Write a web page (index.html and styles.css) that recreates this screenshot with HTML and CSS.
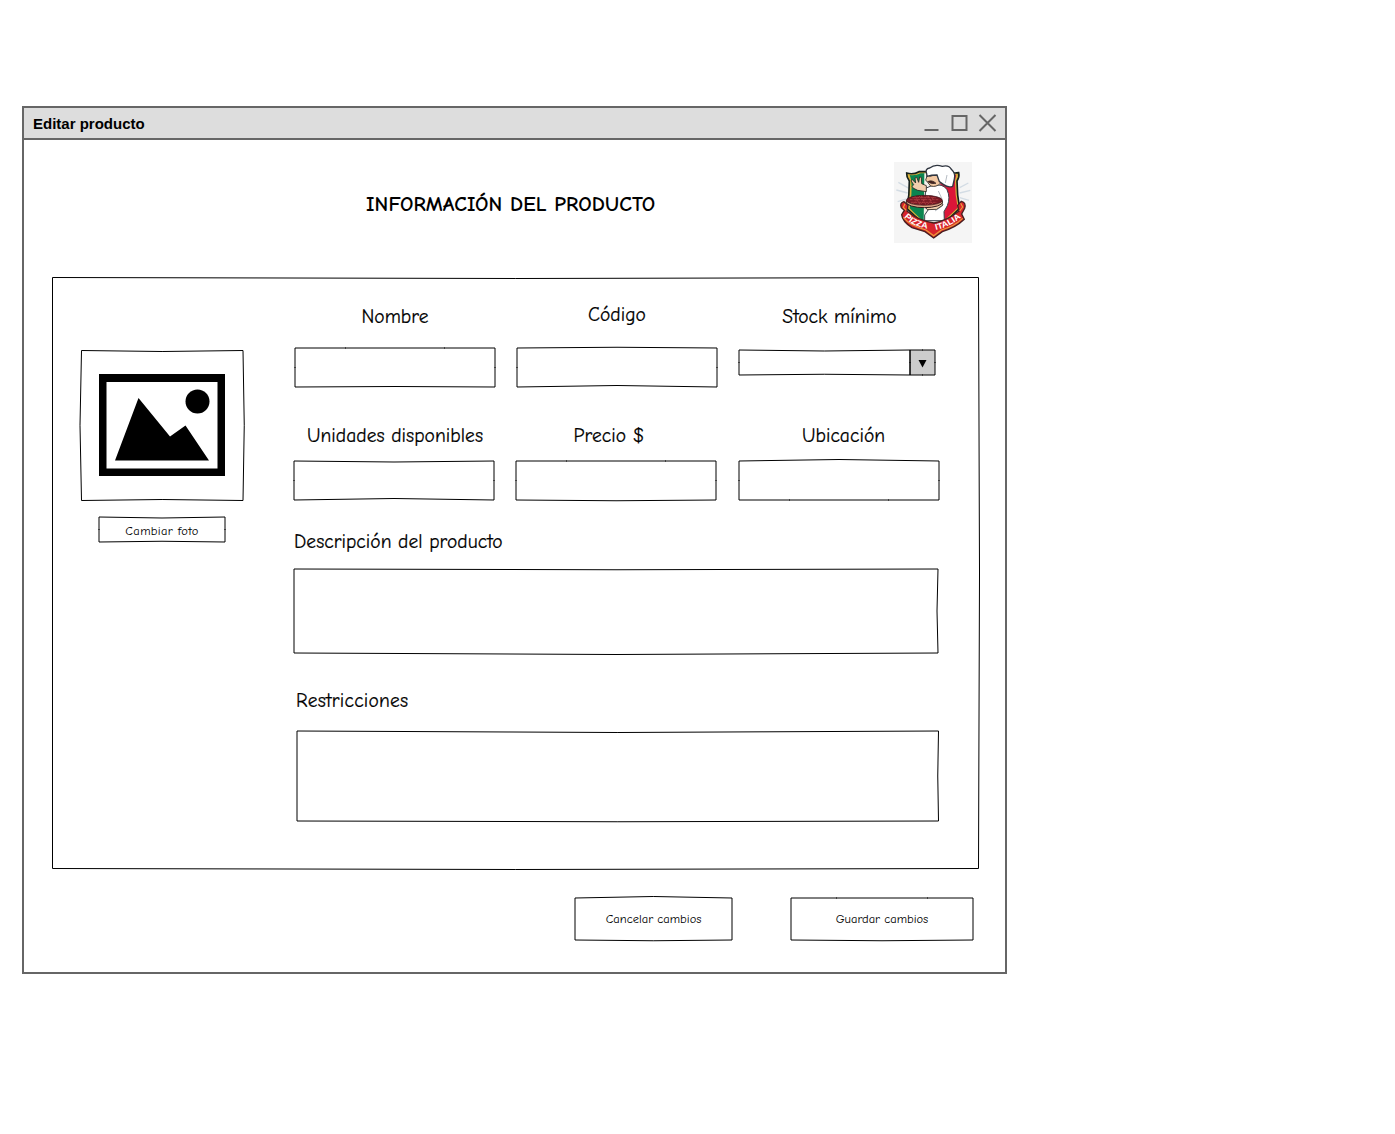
FILE: index.html
```html
<!DOCTYPE html>
<html lang="es">
<head>
<meta charset="utf-8">
<title>Editar producto</title>
<link rel="stylesheet" href="styles.css">
</head>
<body>
<main class="window">
  <header class="titlebar">
    <h1 class="titlebar-text">Editar producto</h1>
    <svg class="controls" width="74" height="20" viewBox="0 0 74 20">
      <path d="M1.500 17H15.500M29.500 3H43.500V17H29.500ZM56.500 2L72.500 18M72.500 2L56.500 18"/>
    </svg>
  </header>

  <section class="heading">
    <h2 class="title">INFORMACIÓN DEL PRODUCTO</h2>
    <svg class="logo" width="78" height="81" viewBox="27 21 234 243">
      <rect x="27" y="21" width="234" height="243" fill="#f5f5f5"/>
      <path d="M40 82L72 100M34 105L68 114M38 140L70 130M224 98L250 84M224 114L256 106M224 128L252 136" stroke="#d3dce4" stroke-width="4"/>
      <path d="M65 54Q84 60 102 50H192Q204 56 221 53Q224 66 216 78Q216 120 224 160L146 236L65 160Q74 120 73 78Q64 66 65 54Z" fill="#d9b23a" stroke="#16201c" stroke-width="5"/>
      <path d="M74 60Q91 63 107 55H126V210L74 160Q82 115 79 76Z" fill="#0b8550"/>
      <path d="M118 55H168V215L146 228L116 205Z" fill="#f4f1ea"/>
      <path d="M166 55H190Q201 61 214 59L210 77Q210 120 218 158L166 208Z" fill="#dc1638"/>
      <path d="M122 100L140 92Q174 84 186 104Q197 128 187 152L177 170L178 197H119V180L130 164L119 156Z" fill="#fff" stroke="#3a424c" stroke-width="3"/>
      <path d="M124 110L98 106L84 99Q78 94 86 89L78 77L82 74L92 84L90 69L95 67L101 82L104 66L109 67L110 86L124 92Z" fill="#f2cfae" stroke="#29251f" stroke-width="2.5"/>
      <path d="M127 61L158 56L167 84Q154 98 137 93L128 82L122 75Z" fill="#f2c8a2" stroke="#29251f" stroke-width="2.5"/>
      <path d="M128 80Q141 73 153 85Q140 89 128 80M133 65L143 62" fill="#4b2620" stroke="#2b211f" stroke-width="2"/>
      <path d="M126 64L125 56Q119 42 134 39Q150 26 172 34Q192 29 199 43Q213 56 208 72L203 94Q190 99 176 89L163 80L156 60Q139 60 126 64Z" fill="#fff" stroke="#303641" stroke-width="4"/>
      <path d="M186 60L181 84M145 138L168 150M150 168L172 153M160 108L172 134" stroke="#b6bcc3" stroke-width="3" fill="none"/>
      <path d="M121 157L153 150L169 140L174 150L155 163L127 164Z" fill="#f2cfae" stroke="#29251f" stroke-width="2.5"/>
      <ellipse cx="118" cy="141" rx="55" ry="17" fill="#e3a98a" stroke="#321c1c" stroke-width="3"/>
      <ellipse cx="118" cy="136" rx="54" ry="15" fill="#791924" stroke="#381719" stroke-width="2"/>
      <path d="M75 134H160M82 128H152M78 142H156M90 124L105 149M109 122L123 150M129 122L143 147M105 123L85 146M127 123L106 149M147 126L127 149" stroke="#c0484a" stroke-width="2" stroke-dasharray="8 3"/>
      <path d="M57 140Q43 144 49 158L58 166L50 179Q52 200 81 218L120 230L146 249L172 230Q212 218 238 193L230 177L239 160Q244 142 229 139L218 151L222 168Q190 195 147 204Q98 196 66 168L69 151Z" fill="#d8242c" stroke="#46201f" stroke-width="4"/>
      <path d="M60 146L55 157L64 166M227 145L233 156L224 168M55 187Q76 212 123 225L146 242L169 225Q208 214 233 190" fill="none" stroke="#eba13b" stroke-width="3.5"/>
      <path id="ribbon-left" d="M57 186Q84 216 134 222" fill="none"/>
      <path id="ribbon-right" d="M152 225Q200 214 232 183" fill="none"/>
      <text class="logo-text"><textPath href="#ribbon-left" textLength="80" lengthAdjust="spacingAndGlyphs">PIZZA</textPath></text>
      <text class="logo-text"><textPath href="#ribbon-right" textLength="86" lengthAdjust="spacingAndGlyphs">ITALIA</textPath></text>
    </svg>
  </section>

  <section class="panel sketch">
    <svg class="outline"><path d="M.5 .5Q463 2.5 926.5 .5Q928.5 296 926.5 591.5Q463 593.5 .5 591.5Z"/></svg>
    <div class="photo-column">
      <div class="photo sketch">
        <svg class="outline"><path d="M.5 .5Q81 2.5 162 .5Q164.5 75 162 150.5Q81 148.5 .5 150.5Q-2.5 75 .5 .5Z"/></svg>
        <svg class="picture" width="126" height="102" viewBox="0 0 126 102">
          <path fill-rule="evenodd" d="M0 0H126V102H0ZM7.5 8V94.5H118.5V8Z"/>
          <path d="M16 86.5L39.5 24L71 62.5L86.500 51.500L110 86.500Z"/>
          <circle cx="98.500" cy="27.500" r="12"/>
        </svg>
      </div>
      <button class="button change-photo sketch">
        <svg class="outline"><path d="M0 0Q63 2 126 0V25Q63 23.500 0 25Z"/><path class="tick" d="M-1 12.500h2M125 12.500h2"/></svg>
        <span>Cambiar foto</span>
      </button>
    </div>

    <form class="fields">
      <div class="row">
        <div class="field">
          <label class="label nombre">Nombre</label>
          <div class="input sketch"><svg class="outline"><path d="M0 0H200V39Q100 38 0 39Z"/><path class="tick" d="M-1 19.500h2M199 19.500h2M50.500 -1v2M149.500 -1v2"/></svg></div>
        </div>
        <div class="field">
          <label class="label codigo">Código</label>
          <div class="input sketch"><svg class="outline"><path d="M0 0Q100 -1.500 200 0V39Q100 36 0 39Z"/><path class="tick" d="M-1 19.500h2M199 19.500h2"/></svg></div>
        </div>
        <div class="field">
          <label class="label stock">Stock mínimo</label>
          <div class="select sketch">
            <svg class="outline"><path class="arrow-box" d="M171 0H196V25H171Z"/><path d="M0 0Q85 2 171 0V25Q85 23.500 0 25Z"/><path class="tick" d="M-1 12.500h2M170 12.500h2M195 12.500h2M183.500 -1v2M183.500 24v2"/><path class="arrow" d="M179.500 10H187.500L183.500 17.500Z"/></svg>
          </div>
        </div>
      </div>
      <div class="row second">
        <div class="field">
          <label class="label unidades">Unidades disponibles</label>
          <div class="input sketch"><svg class="outline"><path d="M0 0Q100 2 200 0V39Q100 36 0 39Z"/><path class="tick" d="M-1 19.500h2M199 19.500h2"/></svg></div>
        </div>
        <div class="field">
          <label class="label precio">Precio $</label>
          <div class="input sketch"><svg class="outline"><path d="M0 0H200V39Q100 40.500 0 39Z"/><path class="tick" d="M-1 19.500h2M199 19.500h2M50.500 -1v2M149.500 -1v2"/></svg></div>
        </div>
        <div class="field">
          <label class="label ubicacion">Ubicación</label>
          <div class="input sketch"><svg class="outline"><path d="M0 0Q100 -3 200 0V39H0Z"/><path class="tick" d="M-1 19.500h2M199 19.500h2M50.500 38v2M149.500 38v2"/></svg></div>
        </div>
      </div>
      <label class="label descripcion">Descripción del producto</label>
      <div class="area description-area sketch"><svg class="outline"><path d="M0 0Q322 1.500 644 0Q642 42 644 84Q322 87 0 84Z"/></svg></div>
      <label class="label restricciones">Restricciones</label>
      <div class="area restriction-area sketch"><svg class="outline"><path d="M0 0Q321 3 641.500 0Q640 45 641.500 90Q321 91.500 0 90Z"/></svg></div>
    </form>
  </section>

  <footer class="actions">
    <button class="button cancel sketch">
      <svg class="outline"><path d="M0 0Q78 -3 157 0V42Q78 43.500 0 42Z"/></svg>
      <span>Cancelar cambios</span>
    </button>
    <button class="button save sketch">
      <svg class="outline"><path d="M0 0H182V42Q91 43.500 0 42Z"/><path class="tick" d="M45.500 -1v2M136.500 -1v2"/></svg>
      <span>Guardar cambios</span>
    </button>
  </footer>
</main>
</body>
</html>
```
FILE: styles.css
```css
* { box-sizing: border-box; }

body {
  margin: 0;
  padding: 106px 0 0 22px;
  background: #fff;
  color: #000;
  font-family: "Comic Sans MS", "Comic Neue", Lato, sans-serif;
}

.window {
  width: 985px;
  height: 868px;
  border: 2px solid #666;
}

.titlebar {
  display: flex;
  align-items: center;
  justify-content: space-between;
  height: 32px;
  padding: 0 8px 0 9px;
  border-bottom: 2px solid #666;
  background: #ddd;
}

.titlebar-text {
  margin: 2px 0 0;
  font: bold 15px/20px "Liberation Sans", Arial, sans-serif;
}

.controls { fill: none; stroke: #666; stroke-width: 2; }

.heading {
  display: flex;
  justify-content: flex-end;
  align-items: flex-start;
  height: 137px;
  padding: 22px 33px 0 0;
}

.title {
  width: 290px;
  margin: 29px 238px 0 0;
  font-size: 21px;
  line-height: 26px;
  font-weight: bold;
  white-space: nowrap;
  letter-spacing: 0.12px;
}

.logo { display: block; flex: none; }
.logo-text { font: bold 25px "Liberation Sans", sans-serif; fill: #fff; }

.sketch { position: relative; }

.outline {
  position: absolute;
  top: 0;
  left: 0;
  width: 100%;
  height: 100%;
  overflow: visible;
  fill: none;
  stroke: #000;
  stroke-width: 1;
}

.tick { opacity: 0.5; }

.panel {
  display: flex;
  width: 927px;
  height: 592px;
  margin-left: 28px;
}

.photo-column { width: 242px; padding: 73px 0 0 29px; }

.photo {
  width: 163px;
  height: 151px;
  padding: 24px 0 0 18px;
}

.picture { display: block; }

.button {
  display: flex;
  align-items: center;
  justify-content: center;
  padding: 0;
  border: 0;
  background: none;
  color: #000;
  font: 12.5px/16px "Comic Sans MS", "Comic Neue", Lato, sans-serif;
}

.change-photo {
  width: 126px;
  height: 25px;
  margin: 16px 0 0 18px;
  padding-top: 2px;
  letter-spacing: 0.35px;
}

.fields { width: 646px; padding-top: 27px; }

.row { display: grid; grid-template-columns: 222px 222px 200px; margin-left: 1px; }
.second { margin: 36px 0 0; grid-template-columns: 222px 223px 200px; }

.label {
  display: block;
  font-size: 19.5px;
  line-height: 26px;
  white-space: nowrap;
  letter-spacing: 0.05px;
  -webkit-text-stroke: 0.2px #000;
}

.row .label { width: 200px; height: 44px; text-align: center; }
.second .label { height: 38px; }
.row .codigo { height: 46px; margin-top: -2px; }
.row .stock { padding-left: 1px; }
.row .unidades { padding-left: 2px; }
.row .precio { padding-right: 14px; }
.row .ubicacion { padding-left: 9px; }

.input { width: 200px; height: 39px; }

.select { width: 196px; height: 25px; margin-top: 2px; }
.arrow-box { fill: #ccc; }
.arrow { fill: #000; stroke: none; }

.descripcion { margin-top: 29px; }
.description-area { width: 644px; height: 84px; margin-top: 14px; }
.restricciones { margin: 35px 0 0 2px; letter-spacing: 0.25px; }
.restriction-area { width: 642px; height: 91px; margin: 17px 0 0 3px; }

.actions {
  display: flex;
  gap: 59px;
  padding: 29px 0 0 551px;
}

.cancel { width: 157px; height: 42px; }
.save { width: 182px; height: 42px; }
```
